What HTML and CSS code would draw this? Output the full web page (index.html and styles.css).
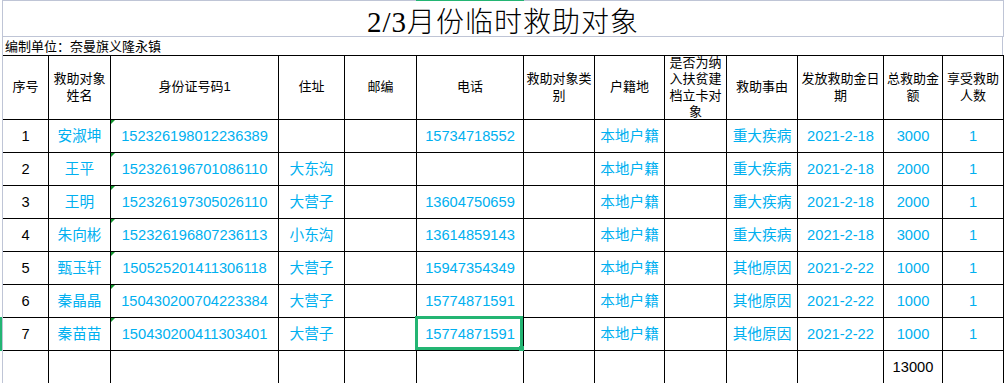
FILE: index.html
```html
<!DOCTYPE html>
<html lang="zh-CN">
<head>
<meta charset="utf-8">
<title>2/3月份临时救助对象</title>
<link rel="stylesheet" href="styles.css">
</head>
<body>
<div class="col-mark"></div>
<div class="sheet">
  <div class="title-row"><h1 class="title"><span class="latin">2/3</span>月份临时救助对象</h1></div>
  <div class="sub-row">编制单位：奈曼旗义隆永镇</div>
  <div class="grid head">
    <div class="c">序号</div>
    <div class="c">救助对象姓名</div>
    <div class="c">身份证号码1</div>
    <div class="c">住址</div>
    <div class="c">邮编</div>
    <div class="c">电话</div>
    <div class="c">救助对象类别</div>
    <div class="c">户籍地</div>
    <div class="c">是否为纳入扶贫建档立卡对象</div>
    <div class="c">救助事由</div>
    <div class="c">发放救助金日期</div>
    <div class="c">总救助金额</div>
    <div class="c">享受救助人数</div>
  </div>
  <div class="grid row">
    <div class="c k">1</div><div class="c">安淑坤</div><div class="c id">152326198012236389</div><div class="c"></div><div class="c"></div><div class="c">15734718552</div><div class="c"></div><div class="c">本地户籍</div><div class="c"></div><div class="c">重大疾病</div><div class="c">2021-2-18</div><div class="c">3000</div><div class="c">1</div>
  </div>
  <div class="grid row">
    <div class="c k">2</div><div class="c">王平</div><div class="c id">152326196701086110</div><div class="c">大东沟</div><div class="c"></div><div class="c"></div><div class="c"></div><div class="c">本地户籍</div><div class="c"></div><div class="c">重大疾病</div><div class="c">2021-2-18</div><div class="c">2000</div><div class="c">1</div>
  </div>
  <div class="grid row">
    <div class="c k">3</div><div class="c">王明</div><div class="c id">152326197305026110</div><div class="c">大营子</div><div class="c"></div><div class="c">13604750659</div><div class="c"></div><div class="c">本地户籍</div><div class="c"></div><div class="c">重大疾病</div><div class="c">2021-2-18</div><div class="c">2000</div><div class="c">1</div>
  </div>
  <div class="grid row">
    <div class="c k">4</div><div class="c">朱向彬</div><div class="c id">152326196807236113</div><div class="c">小东沟</div><div class="c"></div><div class="c">13614859143</div><div class="c"></div><div class="c">本地户籍</div><div class="c"></div><div class="c">重大疾病</div><div class="c">2021-2-18</div><div class="c">3000</div><div class="c">1</div>
  </div>
  <div class="grid row">
    <div class="c k">5</div><div class="c">甄玉轩</div><div class="c id">150525201411306118</div><div class="c">大营子</div><div class="c"></div><div class="c">15947354349</div><div class="c"></div><div class="c">本地户籍</div><div class="c"></div><div class="c">其他原因</div><div class="c">2021-2-22</div><div class="c">1000</div><div class="c">1</div>
  </div>
  <div class="grid row">
    <div class="c k">6</div><div class="c">秦晶晶</div><div class="c id">150430200704223384</div><div class="c">大营子</div><div class="c"></div><div class="c">15774871591</div><div class="c"></div><div class="c">本地户籍</div><div class="c"></div><div class="c">其他原因</div><div class="c">2021-2-22</div><div class="c">1000</div><div class="c">1</div>
  </div>
  <div class="grid row active">
    <div class="c k">7</div><div class="c">秦苗苗</div><div class="c id">150430200411303401</div><div class="c">大营子</div><div class="c"></div><div class="c sel">15774871591<span class="handle"></span></div><div class="c"></div><div class="c">本地户籍</div><div class="c"></div><div class="c">其他原因</div><div class="c">2021-2-22</div><div class="c">1000</div><div class="c">1</div>
  </div>
  <div class="grid row total">
    <div class="c"></div><div class="c"></div><div class="c"></div><div class="c"></div><div class="c"></div><div class="c"></div><div class="c"></div><div class="c"></div><div class="c"></div><div class="c"></div><div class="c"></div><div class="c k">13000</div><div class="c"></div>
  </div>
</div>
</body>
</html>
```

FILE: styles.css
```css
html, body {
  margin: 0;
  padding: 0;
  background: #ffffff;
}
body {
  width: 1006px;
  height: 383px;
  overflow: hidden;
  position: relative;
  font-family: "Liberation Sans", "Noto Sans CJK SC", sans-serif;
  color: #000;
}
.col-mark {
  position: absolute;
  left: 416px;
  top: 0;
  width: 108px;
  height: 1px;
  background: #23b573;
  z-index: 3;
}
.sheet {
  margin-left: 2px;
  width: 1001px;
  border-left: 1px solid #bfc5d6;
}
.title-row {
  height: 35px;
  border-top: 1px solid #bfc5d6;
  border-bottom: 1px solid #bfc5d6;
  border-right: 1px solid #bfc5d6;
  box-sizing: content-box;
  width: 1000px;
  display: flex;
  align-items: center;
  justify-content: center;
}
.title {
  margin: 0;
  padding-top: 5px;
  font-family: "Noto Sans CJK SC", sans-serif;
  font-weight: 300;
  font-size: 28px;
  letter-spacing: 1px;
  line-height: 30px;
}
.title .latin {
  font-family: "Liberation Serif", "Times New Roman", "DejaVu Serif", serif;
  font-weight: 400;
  font-size: 29px;
}
.sub-row {
  height: 18px;
  width: 1000px;
  border-right: 1px solid #bfc5d6;
  padding-left: 2px;
  box-sizing: border-box;
  font-size: 13px;
  line-height: 19px;
  white-space: nowrap;
}
.grid {
  display: grid;
  grid-template-columns: 46px 62px 168px 66px 72px 107px 71px 70px 62px 71px 86px 59px 61px;
  position: relative;
}
.c {
  box-sizing: border-box;
  border-right: 1px solid #000;
  border-bottom: 1px solid #000;
  display: flex;
  align-items: center;
  justify-content: center;
  text-align: center;
  white-space: nowrap;
}
.head {
  border-top: 1px solid #000;
}
.head .c {
  height: 64px;
  font-size: 13px;
  line-height: 16.5px;
  white-space: normal;
  padding: 0 1px;
}
.row .c {
  height: 33px;
  font-size: 14.67px;
  line-height: 18px;
  color: #00b0f0;
}
.row .c.k {
  color: #000;
}
.id {
  position: relative;
}
.id::before {
  content: "";
  position: absolute;
  left: 0;
  top: 0;
  border-top: 4px solid #12962e;
  border-right: 4px solid transparent;
}
.sel {
  position: relative;
}
.sel::after {
  content: "";
  position: absolute;
  left: -2px;
  top: -2px;
  right: 0;
  bottom: 0;
  border: 3px solid #23b573;
  z-index: 2;
}
.handle {
  position: absolute;
  right: -1px;
  bottom: -1px;
  width: 5px;
  height: 5px;
  background: #23b573;
  z-index: 3;
}
.active::before {
  content: "";
  position: absolute;
  left: -3px;
  top: -1px;
  width: 2px;
  height: 34px;
  background: #23b573;
  z-index: 2;
}
```
